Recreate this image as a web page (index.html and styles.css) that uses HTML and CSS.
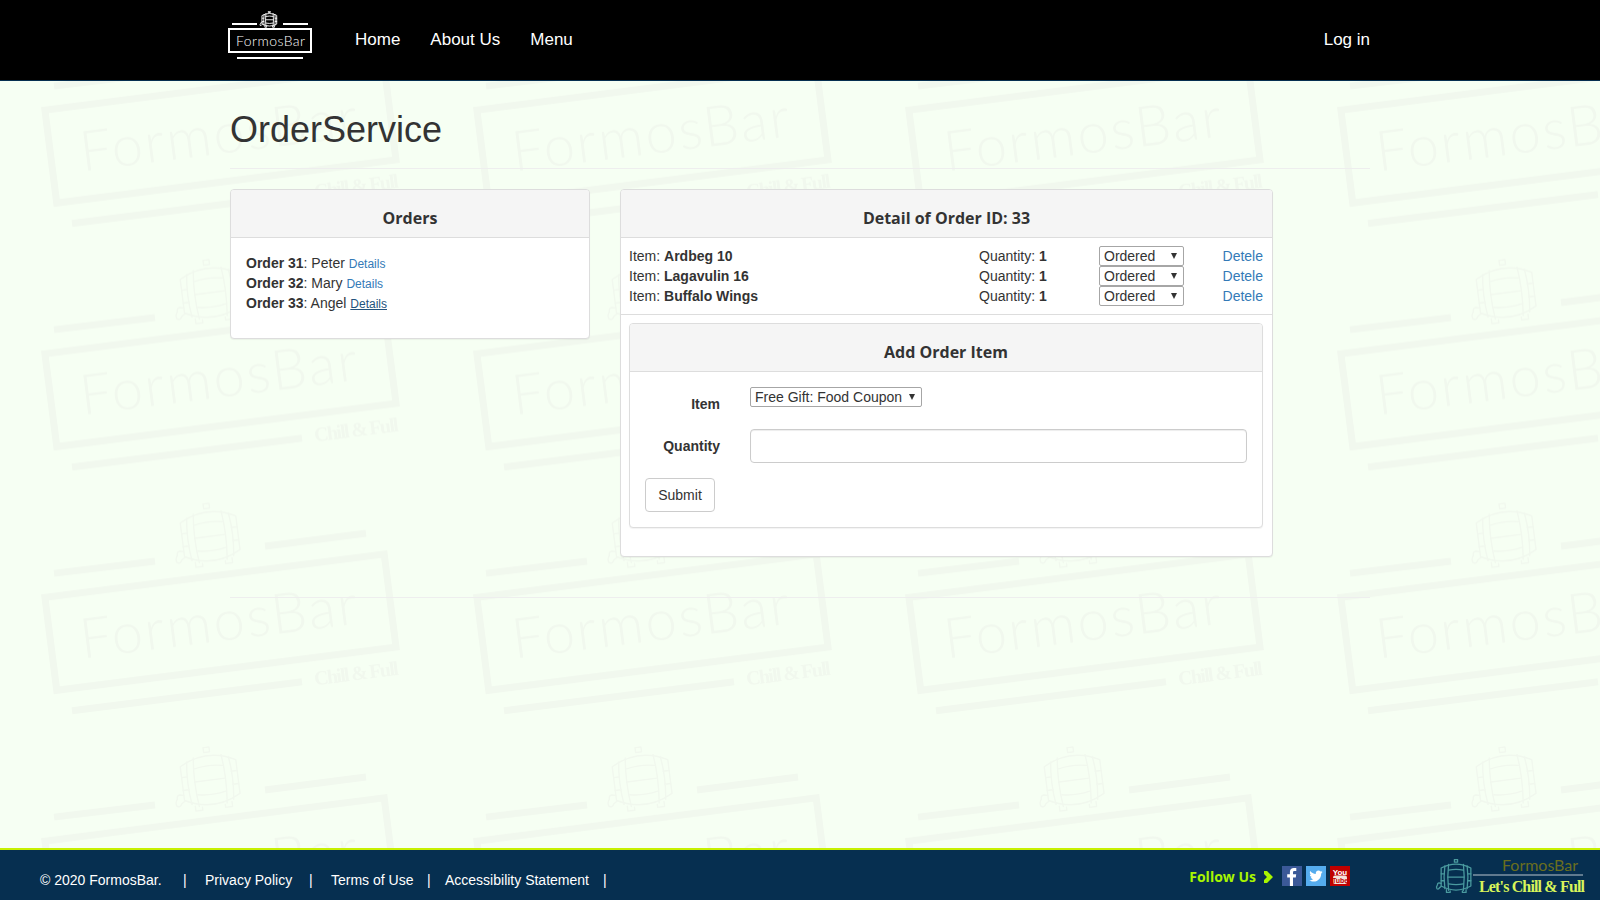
FILE: index.html
```html
<!DOCTYPE html>
<html lang="en">
<head>
<meta charset="utf-8">
<title>OrderService - FormosBar</title>
<link rel="stylesheet" href="styles.css">
</head>
<body>
<svg class="defs" width="0" height="0" aria-hidden="true">
  <symbol id="barrel" viewBox="0 0 80 66">
    <g fill="none" stroke="currentColor" stroke-linejoin="round" stroke-linecap="round">
      <path d="M12 17 Q40 2 68 17 L68 51 Q40 66 12 51 Z"/>
      <path d="M19 13 Q16 34 19 56 M26 10 Q23 34 26 59 M54 10 Q57 34 54 59 M61 13 Q64 34 61 56"/>
      <path d="M26 21 Q40 18 54 21 M25 34 H55 M26 47 Q40 50 54 47"/>
      <path d="M12 28 H18 M12 41 H18 M62 28 H68 M62 41 H68"/>
      <rect x="37" y="1" width="6" height="5"/>
      <path d="M22 58 V63 H29 V60 M52 60 V63 H59 V58"/>
      <path d="M12 46 L8 45 Q5 45 5 49 Q2 53 4 56 Q7 58 9 54 L12 52"/>
    </g>
  </symbol>
</svg>

<svg class="watermark" aria-hidden="true">
  <defs>
    <pattern id="tile" patternUnits="userSpaceOnUse" x="20" y="8" width="432" height="243.67">
      <g class="wm">
        <use href="#barrel" x="146" y="7" width="88" height="66" stroke-width="1.4" transform="rotate(-7.25 190 40)"/>
        <path class="wm-bar" d="M34 78 L135 66 M245 51 L346 38 M52 215.5 L282 186.5"/>
        <g transform="translate(21 99) rotate(-7.25)">
          <rect class="wm-box" x="3.5" y="3.5" width="342" height="93.7"/>
          <text class="wm-name" x="33" y="69" textLength="279" lengthAdjust="spacing">FormosBar</text>
        </g>
        <text class="wm-tag" transform="translate(295 190) rotate(-7.25)" textLength="85" lengthAdjust="spacing">Chill &amp; Full</text>
      </g>
    </pattern>
  </defs>
  <rect width="100%" height="100%" fill="url(#tile)"/>
</svg>

<header class="topbar">
  <div class="topbar-inner">
    <a class="brand" href="#">
      <svg class="brand-logo" width="84" height="50" viewBox="0 0 84 50">
        <use href="#barrel" x="31" y="1" width="21" height="17" stroke-width="3.5"/>
        <path class="brand-line" d="M4 14 H29 M55 14 H80 M9 48 H75"/>
        <rect class="brand-line" x="1" y="19" width="82" height="23"/>
        <text class="brand-name" x="8" y="36" textLength="69" lengthAdjust="spacing">FormosBar</text>
      </svg>
    </a>
    <nav class="nav">
      <a href="#">Home</a>
      <a href="#">About Us</a>
      <a href="#">Menu</a>
    </nav>
    <nav class="nav nav-right">
      <a href="#">Log in</a>
    </nav>
  </div>
</header>

<main class="page">
  <h1 class="title">OrderService</h1>
  <hr class="rule">
  <div class="columns">
    <section class="panel">
      <h3 class="panel-head">Orders</h3>
      <div class="panel-body orders">
        <div class="order"><b>Order 31</b>: Peter <a class="small-link" href="#">Details</a></div>
        <div class="order"><b>Order 32</b>: Mary <a class="small-link" href="#">Details</a></div>
        <div class="order"><b>Order 33</b>: Angel <a class="small-link is-hover" href="#">Details</a></div>
      </div>
    </section>
    <section class="panel">
      <h3 class="panel-head">Detail of Order ID: 33</h3>
      <div class="lines">
        <div class="line">
          <span>Item: <b>Ardbeg 10</b></span>
          <span>Quantity: <b>1</b></span>
          <span class="pick pick-status"><select><option>Ordered</option></select></span>
          <a href="#">Detele</a>
        </div>
        <div class="line">
          <span>Item: <b>Lagavulin 16</b></span>
          <span>Quantity: <b>1</b></span>
          <span class="pick pick-status"><select><option>Ordered</option></select></span>
          <a href="#">Detele</a>
        </div>
        <div class="line">
          <span>Item: <b>Buffalo Wings</b></span>
          <span>Quantity: <b>1</b></span>
          <span class="pick pick-status"><select><option>Ordered</option></select></span>
          <a href="#">Detele</a>
        </div>
      </div>
      <hr class="inner-rule">
      <section class="panel nested">
        <h3 class="panel-head">Add Order Item</h3>
        <form class="panel-body form">
          <label class="form-label">Item</label>
          <span class="pick pick-item"><select><option>Free Gift: Food Coupon</option></select></span>
          <label class="form-label">Quantity</label>
          <input class="form-input" type="text">
          <button class="btn" type="button">Submit</button>
        </form>
      </section>
    </section>
  </div>
  <hr class="rule rule-end">
</main>

<footer class="footer">
  <div class="foot-left">
    <span>© 2020 FormosBar.</span><span>|</span>
    <a href="#">Privacy Policy</a><span>|</span>
    <a href="#">Terms of Use</a><span>|</span>
    <a href="#">Accessibility Statement</a><span>|</span>
  </div>
  <div class="foot-follow">
    <span class="follow-text">Follow Us</span>
    <svg class="chevron" width="10" height="12" viewBox="0 0 10 12"><path d="M1 0 L4 0 L10 6 L4 12 L1 12 L1 9 L4 6 L1 3 Z"/></svg>
    <a class="social" href="#" aria-label="Facebook">
      <svg width="20" height="20" viewBox="0 0 20 20"><rect class="fb" width="20" height="20"/><path fill="#fff" d="M11 20 V11.5 H13.8 L14.2 8.3 H11 V6.4 C11 5.4 11.3 4.9 12.6 4.9 H14.3 V2 C13.9 2 13 1.9 11.9 1.9 C9.5 1.9 7.9 3.3 7.9 5.9 V8.3 H5.2 V11.5 H7.9 V20 Z"/></svg>
    </a>
    <a class="social" href="#" aria-label="Twitter">
      <svg width="20" height="20" viewBox="0 0 20 20"><rect class="tw" width="20" height="20"/><path fill="#fff" transform="translate(2.2 2.2) scale(.78)" d="M18.5 4.7 C17.9 5 17.2 5.2 16.5 5.3 C17.2 4.9 17.8 4.2 18 3.4 C17.3 3.8 16.6 4.1 15.8 4.2 C15.1 3.5 14.2 3.1 13.2 3.1 C11.2 3.1 9.7 4.7 9.7 6.6 C9.7 6.9 9.7 7.2 9.8 7.4 C6.9 7.3 4.3 5.9 2.6 3.7 C2.3 4.2 2.1 4.9 2.1 5.5 C2.1 6.7 2.7 7.8 3.7 8.4 C3.1 8.4 2.6 8.2 2.1 8 C2.1 9.7 3.3 11.1 4.9 11.4 C4.4 11.6 3.8 11.6 3.3 11.5 C3.7 12.9 5.1 13.9 6.6 13.9 C5.1 15.1 3.2 15.7 1.4 15.5 C3 16.5 4.9 17.1 6.9 17.1 C13.2 17.1 16.8 11.8 16.6 7 C17.3 6.4 18 5.6 18.5 4.7 Z"/></svg>
    </a>
    <a class="social" href="#" aria-label="YouTube">
      <svg width="20" height="20" viewBox="0 0 20 20"><rect class="yt" width="20" height="20"/><text class="yt-you" x="10" y="8.5">You</text><rect fill="#f3e3dc" x="3" y="9.5" width="14" height="8.5" rx="2"/><text class="yt-tube" x="10" y="16.5">Tube</text></svg>
    </a>
  </div>
  <svg class="foot-logo" width="150" height="46" viewBox="0 -6 150 46">
    <use class="foot-barrel" href="#barrel" x="-2" y="1" width="46" height="35" stroke-width="2.4"/>
    <path class="foot-line" d="M38 17 H148"/>
    <text class="foot-name" x="67" y="13" textLength="76" lengthAdjust="spacing">FormosBar</text>
    <text class="foot-tag" x="44" y="34" textLength="106" lengthAdjust="spacing">Let's Chill &amp; Full</text>
  </svg>
</footer>
</body>
</html>
```

FILE: styles.css
```css
* { box-sizing: border-box; }

html, body { height: 100%; }

body {
  margin: 0;
  min-height: 900px;
  display: flex;
  flex-direction: column;
  position: relative;
  background: #f6fff3;
  color: #333;
  font: 14px/20px "Liberation Sans", Arial, sans-serif;
}

a { color: #337ab7; text-decoration: none; }

.defs { position: absolute; }

.watermark {
  position: absolute;
  inset: 0;
  width: 100%;
  height: 100%;
}

.wm { color: #f1f8ee; }
.wm-bar { fill: none; stroke: #f1f8ee; stroke-width: 7; }
.wm-box { fill: none; stroke: #f1f8ee; stroke-width: 7; }
.wm-name { font: 300 56px Lato, "Liberation Sans", sans-serif; fill: #f1f8ee; }
.wm-tag { font: bold 20px "Liberation Serif", serif; fill: #f1f8ee; }

.topbar {
  position: relative;
  height: 81px;
  background: #000;
  border-bottom: 1px solid #062f50;
  flex: none;
}

.topbar-inner {
  width: 1170px;
  margin: 0 auto;
  display: flex;
  align-items: flex-start;
}

.brand { margin: 10px 28px 0 13px; display: block; color: #fff; height: 50px; }
.brand-logo { display: block; color: #fff; }
.brand-line { fill: none; stroke: #fff; stroke-width: 2; }
.brand-name { font: 300 14px Lato, "Liberation Sans", sans-serif; fill: #fff; }

.nav { display: flex; }
.nav a {
  display: block;
  padding: 30px 15px 0;
  color: #fff;
  font-size: 17px;
  line-height: 20px;
}
.nav-right { margin-left: auto; }

.page {
  position: relative;
  flex: 1;
  width: 1140px;
  margin: 0 auto;
  padding-top: 29px;
}

.title {
  margin: 0 0 18px;
  font-size: 36px;
  font-weight: 400;
  line-height: 40px;
}

.rule {
  margin: 0 0 20px;
  border: 0;
  border-top: 1px solid #eeeeee;
}

.rule-end { margin-top: 20px; }

.columns {
  display: grid;
  grid-template-columns: 360px 653px;
  gap: 30px;
  align-items: start;
}

.panel {
  background: #fff;
  border: 1px solid #ddd;
  border-radius: 4px;
  box-shadow: 0 1px 1px rgba(0, 0, 0, .05);
  margin-bottom: 20px;
}

.panel-head {
  margin: 0;
  padding: 19px 15px 10px;
  background: #f5f5f5;
  border-bottom: 1px solid #ddd;
  border-radius: 3px 3px 0 0;
  text-align: center;
  font: bold 16px/18px "Open Sans", sans-serif;
  color: #333;
}

.panel-body { padding: 15px; }

.orders { padding-bottom: 25px; }
.order { height: 20px; }
.small-link { font-size: 12px; line-height: 1; }
.is-hover { color: #23527c; text-decoration: underline; }

.lines { padding: 8px 9px 0 8px; }

.line {
  display: grid;
  grid-template-columns: 350px 120px 1fr auto;
  height: 20px;
  line-height: 20px;
}

.inner-rule {
  margin: 8px 0;
  border: 0;
  border-top: 1px solid #ddd;
}

.nested { margin: 0 9px 28px 8px; box-shadow: 0 1px 1px rgba(0, 0, 0, .05); }

.pick { display: block; position: relative; height: 20px; }
.pick::after {
  content: "";
  position: absolute;
  top: 7px;
  right: 7px;
  border-left: 3px solid transparent;
  border-right: 3px solid transparent;
  border-top: 6px solid #333;
}
.pick select {
  display: block;
  width: 100%;
  height: 20px;
  margin: 0;
  padding: 0 0 0 4px;
  appearance: none;
  background: #fff;
  border: 1px solid #a6a6a6;
  border-radius: 2px;
  color: #333;
  font: 14px/18px "Liberation Sans", Arial, sans-serif;
}
.pick-status { width: 85px; }
.pick-item { width: 172px; }

.form {
  display: grid;
  grid-template-columns: 75px 1fr;
  column-gap: 30px;
  row-gap: 15px;
  justify-items: start;
}

.form-label {
  justify-self: end;
  padding-top: 7px;
  font-weight: bold;
  line-height: 20px;
}

.form-input {
  width: 100%;
  height: 34px;
  padding: 6px 12px;
  background: #fff;
  border: 1px solid #ccc;
  border-radius: 4px;
  box-shadow: inset 0 1px 1px rgba(0, 0, 0, .075);
}

.btn {
  grid-column: 1 / -1;
  width: 70px;
  height: 34px;
  padding: 0;
  background: #fff;
  border: 1px solid #ccc;
  border-radius: 4px;
  color: #333;
  font: 14px/20px "Liberation Sans", Arial, sans-serif;
}

.footer {
  position: relative;
  flex: none;
  height: 52px;
  display: flex;
  align-items: center;
  background: #062f50;
  border-top: 2px solid #c6f000;
  color: #fff;
}

.foot-left {
  display: grid;
  grid-template-columns: 143px 22px 104px 22px 96px 18px 158px auto;
  margin-left: 40px;
  padding-top: 10px;
}
.foot-left a { color: #fff; }

.foot-follow {
  display: flex;
  align-items: center;
  margin-left: auto;
  padding-top: 2px;
}

.follow-text {
  margin-top: 2px;
  color: #a8f500;
  font: bold 14px/20px "Open Sans", sans-serif;
}

.chevron { margin: 2px 9px 0 7px; fill: #a8f500; display: block; }

.social { display: block; width: 20px; height: 20px; margin-right: 4px; }
.social svg { display: block; }
.social:last-child { margin-right: 0; }
.fb { fill: #3b5998; }
.tw { fill: #55acee; }
.yt { fill: #c00000; }
.yt-you { font: bold 8px "Liberation Sans", sans-serif; fill: #fff; text-anchor: middle; }
.yt-tube { font: bold 7px "Liberation Sans", sans-serif; fill: #c00000; text-anchor: middle; }

.foot-logo { display: block; margin: 0 15px 0 85px; }
.foot-barrel { color: #4a9a9f; }
.foot-line { stroke: #7f95a5; stroke-width: 1.5; fill: none; }
.foot-name { font: 16px Lato, "Liberation Sans", sans-serif; fill: #6a6e1e; }
.foot-tag { font: bold 16px "Liberation Serif", serif; fill: #d8f55a; }
```
